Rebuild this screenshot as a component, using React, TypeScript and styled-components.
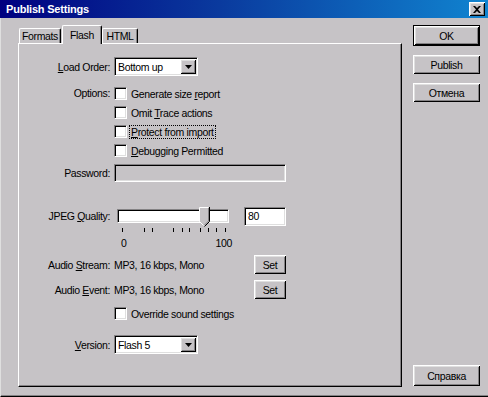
import styled, { createGlobalStyle } from "styled-components";

const GlobalStyle = createGlobalStyle`
  * { box-sizing: border-box; }
  html, body { margin: 0; padding: 0; background: #c6c3c6; }
  body {
    font-family: "Liberation Sans", Arial, sans-serif;
    font-size: 10.5px;
    letter-spacing: -0.35px;
    color: #000;
  }
`;

const ticks = [8, 30, 38, 59, 68, 75, 86, 94, 102, 111];

const App = () => {
  return (
    <>
      <GlobalStyle />
      <Window>
        <TitleBar>
          <TitleText>Publish Settings</TitleText>
          <CloseButton>
            <svg width="8" height="7" viewBox="0 0 8 7">
              <path d="M0 0h2l2 2 2-2h2L5 3.5 8 7H6L4 5 2 7H0l3-3.5z" fill="#000" />
            </svg>
          </CloseButton>
        </TitleBar>
        <Body>
          <LeftArea>
            <TabStrip>
              <Tab $width={42}>Formats</Tab>
              <Tab $width={40} $active>
                Flash
              </Tab>
              <Tab $width={36}>HTML</Tab>
            </TabStrip>
            <Panel>
              <Row>
                <Label>
                  <U>L</U>oad Order:
                </Label>
                <Combo>
                  <ComboText>Bottom up</ComboText>
                  <DropButton>
                    <svg width="7" height="4" viewBox="0 0 7 4">
                      <path d="M0 0h7L3.5 4z" fill="#000" />
                    </svg>
                  </DropButton>
                </Combo>
              </Row>

              <Row $mt={8} $top>
                <Label $lh={19}>Options:</Label>
                <CheckList>
                  <CheckRow>
                    <CheckBox />
                    <CheckLabel>
                      Generate size <U>r</U>eport
                    </CheckLabel>
                  </CheckRow>
                  <CheckRow>
                    <CheckBox />
                    <CheckLabel>
                      Omit <U>T</U>race actions
                    </CheckLabel>
                  </CheckRow>
                  <CheckRow>
                    <CheckBox />
                    <CheckLabel $focus>
                      <U>P</U>rotect from import
                    </CheckLabel>
                  </CheckRow>
                  <CheckRow>
                    <CheckBox />
                    <CheckLabel>
                      <U>D</U>ebugging Permitted
                    </CheckLabel>
                  </CheckRow>
                </CheckList>
              </Row>

              <Row $mt={4}>
                <Label>Password:</Label>
                <PasswordField />
              </Row>

              <Row $mt={25} $top>
                <Label $lh={19}>
                  JPEG <U>Q</U>uality:
                </Label>
                <SliderWrap>
                  <TrackArea>
                    <Track />
                    <Thumb>
                      <svg width="11" height="20" viewBox="0 0 11 20">
                        <path d="M0.5 0.5h10v14l-5 5-5-5z" fill="#c6c3c6" />
                        <path d="M0.5 14.5v-14h9" stroke="#fff" fill="none" />
                        <path d="M10.5 0v14.5l-5 5" stroke="#000" fill="none" />
                        <path d="M9.5 1v13l-4 4" stroke="#848284" fill="none" />
                        <path d="M0.5 14.5l4 4" stroke="#fff" fill="none" />
                      </svg>
                    </Thumb>
                  </TrackArea>
                  <svg width="115" height="6" viewBox="0 0 115 6">
                    {ticks.map((x) => (
                      <rect key={x} x={x} y={1} width={1} height={4} fill="#000" />
                    ))}
                  </svg>
                  <ScaleLabels>
                    <span>0</span>
                    <span>100</span>
                  </ScaleLabels>
                </SliderWrap>
                <QualityBox>80</QualityBox>
              </Row>

              <Row $mt={6}>
                <Label>
                  Audio <U>S</U>tream:
                </Label>
                <ValueText>MP3, 16 kbps, Mono</ValueText>
                <SetButton>Set</SetButton>
              </Row>

              <Row $mt={6}>
                <Label>
                  Audio <U>E</U>vent:
                </Label>
                <ValueText>MP3, 16 kbps, Mono</ValueText>
                <SetButton>Set</SetButton>
              </Row>

              <Row $mt={5}>
                <Label />
                <CheckRow>
                  <CheckBox />
                  <CheckLabel>Override sound settings</CheckLabel>
                </CheckRow>
              </Row>

              <Row $mt={12}>
                <Label>
                  <U>V</U>ersion:
                </Label>
                <Combo>
                  <ComboText>Flash 5</ComboText>
                  <DropButton>
                    <svg width="7" height="4" viewBox="0 0 7 4">
                      <path d="M0 0h7L3.5 4z" fill="#000" />
                    </svg>
                  </DropButton>
                </Combo>
              </Row>
            </Panel>
          </LeftArea>

          <ButtonColumn>
            <DialogButton $default>OK</DialogButton>
            <DialogButton>Publish</DialogButton>
            <DialogButton>Отмена</DialogButton>
            <HelpButton>Справка</HelpButton>
          </ButtonColumn>
        </Body>
      </Window>
    </>
  );
};

export default App;

const raised = `
  box-shadow: inset 1px 1px #fff, inset -1px -1px #000, inset 2px 2px #dfdfdf, inset -2px -2px #848284;
`;

const sunken = `
  border: 1px solid;
  border-color: #848284 #fff #fff #848284;
  box-shadow: inset 1px 1px #000, inset -1px -1px #dfdfdf;
`;

const Window = styled.div`
  width: 488px;
  height: 397px;
  display: flex;
  flex-direction: column;
  background: #c6c3c6;
`;

const TitleBar = styled.div`
  height: 18px;
  flex-shrink: 0;
  display: flex;
  align-items: center;
  justify-content: space-between;
  padding: 0 3px 0 6px;
  background: linear-gradient(90deg, #000080 0%, #0a3a9e 45%, #1084d0 100%);
`;

const TitleText = styled.div`
  color: #fff;
  font-weight: bold;
  font-size: 11px;
  letter-spacing: -0.2px;
`;

const CloseButton = styled.div`
  width: 16px;
  height: 14px;
  background: #c6c3c6;
  display: flex;
  align-items: center;
  justify-content: center;
  ${raised}
`;

const Body = styled.div`
  flex: 1;
  display: flex;
  padding: 7px 8px 9px 17px;
  border-left: 1px solid #dfdfdf;
  border-bottom: 1px solid #000;
  box-shadow: inset 0 -1px #848284;
`;

const LeftArea = styled.div`
  width: 384px;
  display: flex;
  flex-direction: column;
`;

const TabStrip = styled.div`
  height: 18px;
  display: flex;
  align-items: flex-end;
  padding-left: 1px;
`;

const Tab = styled.div<{ $width: number; $active?: boolean }>`
  width: ${(p) => p.$width}px;
  height: ${(p) => (p.$active ? 19 : 15)}px;
  margin-left: ${(p) => (p.$active ? 1 : 0)}px;
  margin-bottom: ${(p) => (p.$active ? -1 : 0)}px;
  position: relative;
  z-index: ${(p) => (p.$active ? 1 : 0)};
  background: #c6c3c6;
  border-top: 1px solid #fff;
  border-left: 1px solid #fff;
  border-right: 1px solid #000;
  border-radius: 2px 2px 0 0;
  box-shadow: inset -1px 0 #848284;
  display: flex;
  justify-content: center;
  padding-top: ${(p) => (p.$active ? 3 : 1)}px;
  white-space: nowrap;
  overflow: hidden;
`;

const Panel = styled.div`
  flex: 1;
  display: flex;
  flex-direction: column;
  padding-top: 13px;
  border: 1px solid;
  border-color: #fff #000 #000 #fff;
  box-shadow: inset -1px -1px #848284;
`;

const Row = styled.div<{ $mt?: number; $top?: boolean }>`
  display: flex;
  align-items: ${(p) => (p.$top ? "flex-start" : "center")};
  margin-top: ${(p) => p.$mt ?? 0}px;
  width: 267px;
`;

const Label = styled.div<{ $lh?: number }>`
  width: 91px;
  flex-shrink: 0;
  margin-right: 4px;
  text-align: right;
  white-space: nowrap;
  line-height: ${(p) => (p.$lh ? `${p.$lh}px` : "normal")};
`;

const U = styled.span`
  text-decoration: underline;
`;

const Combo = styled.div`
  width: 84px;
  height: 19px;
  background: #fff;
  display: flex;
  align-items: center;
  padding: 0 1px 0 3px;
  ${sunken}
`;

const ComboText = styled.span`
  flex: 1;
  white-space: nowrap;
`;

const DropButton = styled.div`
  width: 16px;
  height: 15px;
  background: #c6c3c6;
  display: flex;
  align-items: center;
  justify-content: center;
  ${raised}
`;

const CheckList = styled.div`
  display: flex;
  flex-direction: column;
`;

const CheckRow = styled.div`
  display: flex;
  align-items: center;
  height: 19px;
`;

const CheckBox = styled.div`
  width: 13px;
  height: 13px;
  background: #fff;
  flex-shrink: 0;
  ${sunken}
`;

const CheckLabel = styled.span<{ $focus?: boolean }>`
  margin-left: 3px;
  padding: 0 1px;
  white-space: nowrap;
  outline: ${(p) => (p.$focus ? "1px dotted #000" : "none")};
`;

const PasswordField = styled.div`
  width: 172px;
  height: 18px;
  background: #c6c3c6;
  ${sunken}
`;

const SliderWrap = styled.div`
  width: 115px;
  display: flex;
  flex-direction: column;
`;

const TrackArea = styled.div`
  position: relative;
  height: 20px;
  padding: 2px 0 0 3px;
`;

const Track = styled.div`
  width: 112px;
  height: 14px;
  background: #fff;
  ${sunken}
`;

const Thumb = styled.div`
  position: absolute;
  left: 85px;
  top: 0;
  width: 11px;
  height: 20px;
`;

const ScaleLabels = styled.div`
  display: flex;
  justify-content: space-between;
  width: 118px;
  padding-left: 7px;
  margin-top: 4px;
`;

const QualityBox = styled.div`
  width: 42px;
  height: 19px;
  margin-left: auto;
  background: #fff;
  padding: 2px 0 0 3px;
  ${sunken}
`;

const ValueText = styled.span`
  white-space: nowrap;
`;

const SetButton = styled.div`
  width: 32px;
  height: 19px;
  margin-left: auto;
  display: flex;
  align-items: center;
  justify-content: center;
  ${raised}
`;

const ButtonColumn = styled.div`
  width: 67px;
  margin-left: 11px;
  display: flex;
  flex-direction: column;
  gap: 9px;
`;

const DialogButton = styled.div<{ $default?: boolean }>`
  height: ${(p) => (p.$default ? 21 : 19)}px;
  display: flex;
  align-items: center;
  justify-content: center;
  border: ${(p) => (p.$default ? "1px solid #000" : "none")};
  ${raised}
`;

const HelpButton = styled(DialogButton)`
  margin-top: auto;
  height: 21px;
  margin-bottom: 1px;
`;
